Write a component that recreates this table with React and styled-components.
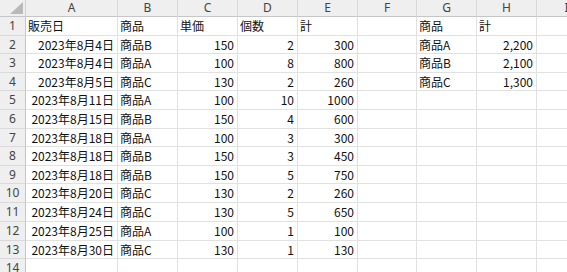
import React from "react";
import styled, { createGlobalStyle } from "styled-components";

const Global = createGlobalStyle`
  html, body { margin: 0; padding: 0; background: #ffffff; }
  body { font-family: "Noto Sans CJK JP", "Noto Sans", sans-serif; overflow: hidden; }
`;

const COLS = [26, 92, 60, 60, 60, 60, 59, 60, 60, 60];
const ROWS = [17, 19, 18, 19, 18, 19, 19, 18, 19, 18, 19, 19, 19, 18, 19];

const Sheet = styled.div`
  display: grid;
  grid-template-columns: ${COLS.map((c) => c + "px").join(" ")};
  grid-template-rows: ${ROWS.map((r) => r + "px").join(" ")};
  width: 567px;
  height: 272px;
  overflow: hidden;
  font-size: 12px;
  color: #111;
`;

const Corner = styled.div`
  box-sizing: border-box;
  background: #efefef;
  border-right: 1px solid #d2d2d2;
  border-bottom: 1px solid #c6c6c6;
  display: flex;
  align-items: flex-end;
  justify-content: flex-end;
  padding: 0 2px 2px 0;
`;

const ColHead = styled.div`
  box-sizing: border-box;
  background: #efefef;
  border-right: 1px solid #d9d9d9;
  border-bottom: 1px solid #c6c6c6;
  color: #444;
  display: flex;
  align-items: center;
  justify-content: center;
  font-family: "Noto Sans", sans-serif;
  font-size: 12px;
  line-height: 1;
  white-space: nowrap;
`;

const RowHead = styled.div`
  box-sizing: border-box;
  background: #efefef;
  border-right: 1px solid #c6c6c6;
  border-bottom: 1px solid #d9d9d9;
  color: #444;
  display: flex;
  align-items: center;
  justify-content: center;
  font-family: "Noto Sans", sans-serif;
  font-size: 12px;
  line-height: 1;
`;

const Cell = styled.div`
  box-sizing: border-box;
  border-right: 1px solid #e1e1e1;
  border-bottom: 1px solid #e1e1e1;
  display: flex;
  align-items: center;
  justify-content: ${(p) => (p.$num ? "flex-end" : "flex-start")};
  padding: 0 ${(p) => (p.$num ? "3px" : "0")} 0 ${(p) => (p.$num ? "0" : "2px")};
  white-space: nowrap;
  line-height: 1;
  font-size: 12px;
  color: #111;
`;

const letters = ["A", "B", "C", "D", "E", "F", "G", "H", "I"];

const data = [
  ["2023年8月4日", "商品B", 150, 2, 300],
  ["2023年8月4日", "商品A", 100, 8, 800],
  ["2023年8月5日", "商品C", 130, 2, 260],
  ["2023年8月11日", "商品A", 100, 10, 1000],
  ["2023年8月15日", "商品B", 150, 4, 600],
  ["2023年8月18日", "商品A", 100, 3, 300],
  ["2023年8月18日", "商品B", 150, 3, 450],
  ["2023年8月18日", "商品B", 150, 5, 750],
  ["2023年8月20日", "商品C", 130, 2, 260],
  ["2023年8月24日", "商品C", 130, 5, 650],
  ["2023年8月25日", "商品A", 100, 1, 100],
  ["2023年8月30日", "商品C", 130, 1, 130],
];

const summary = [
  ["商品A", "2,200"],
  ["商品B", "2,100"],
  ["商品C", "1,300"],
];

function buildRow(r) {
  if (r === 1) {
    return [
      ["販売日", false],
      ["商品", false],
      ["単価", false],
      ["個数", false],
      ["計", false],
      ["", false],
      ["商品", false],
      ["計", false],
      ["", false],
    ];
  }
  const d = data[r - 2];
  const s = summary[r - 2];
  return [
    [d ? d[0] : "", true],
    [d ? d[1] : "", false],
    [d ? d[2] : "", true],
    [d ? d[3] : "", true],
    [d ? d[4] : "", true],
    ["", false],
    [s ? s[0] : "", false],
    [s ? s[1] : "", true],
    ["", false],
  ];
}

export default function App() {
  const rows = [];
  for (let r = 1; r <= 14; r++) {
    const cells = buildRow(r);
    rows.push(<RowHead key={"rh" + r}>{r}</RowHead>);
    cells.forEach(([v, n], i) => {
      rows.push(
        <Cell key={r + "-" + i} $num={n}>
          {v}
        </Cell>
      );
    });
  }
  return (
    <>
      <Global />
      <Sheet>
        <Corner>
          <svg width="13" height="12" viewBox="0 0 13 12">
            <polygon points="13,0 13,12 0,12" fill="#b9b9b9" />
          </svg>
        </Corner>
        {letters.map((l) => (
          <ColHead key={l}>{l}</ColHead>
        ))}
        {rows}
      </Sheet>
    </>
  );
}
